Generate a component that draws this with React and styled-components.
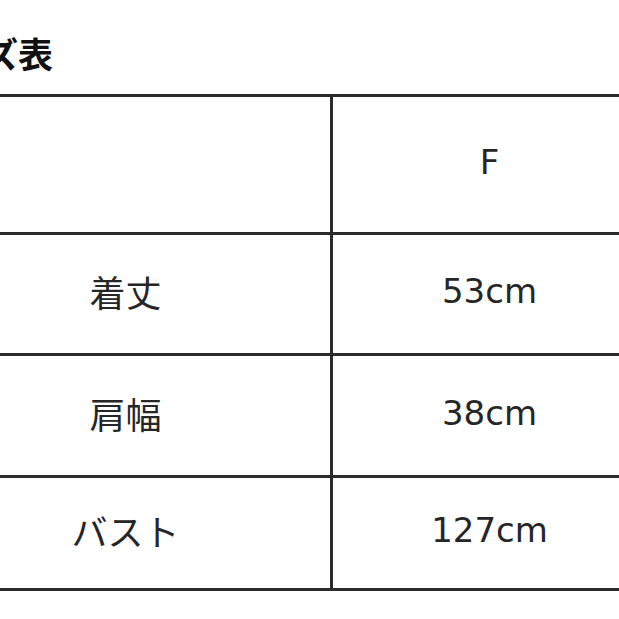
import React from "react";
import styled, { createGlobalStyle } from "styled-components";

const Global = createGlobalStyle`
  html, body { margin: 0; padding: 0; background: #fff; overflow: hidden; }
  body { width: 619px; height: 619px; }
`;

const Page = styled.div`
  width: 728px;
  margin-left: -82px;
  padding-top: 36px;
  font-family: "DejaVu Sans", "Noto Sans CJK JP", sans-serif;
  color: #222;
`;

const Title = styled.h2`
  margin: 0 0 24px -4px;
  font-family: "Noto Sans CJK JP", sans-serif;
  font-weight: 700;
  font-size: 35px;
  line-height: 34px;
  color: #111;
`;

const Table = styled.table`
  width: 100%;
  border-collapse: collapse;
  table-layout: fixed;
`;

const Row = styled.tr`
  height: ${(p) => p.$h}px;
`;

const Cell = styled.td`
  border: 3px solid #2b2b2b;
  text-align: center;
  vertical-align: middle;
  padding: 0 0 6px 0;
  font-size: ${(p) => (p.$jp ? 36 : 34)}px;
  font-family: ${(p) =>
    p.$jp ? `"Noto Sans CJK JP", sans-serif` : `"DejaVu Sans", sans-serif`};
  color: #262626;
`;

const rows = [
  { label: "", value: "F", h: 138 },
  { label: "着丈", value: "53cm", h: 121 },
  { label: "肩幅", value: "38cm", h: 122 },
  { label: "バスト", value: "127cm", h: 113 },
];

export default function App() {
  return (
    <>
      <Global />
      <Page>
        <Title>サイズ表</Title>
        <Table>
          <colgroup>
            <col style={{ width: "412px" }} />
            <col style={{ width: "316px" }} />
          </colgroup>
          <tbody>
            {rows.map((r, i) => (
              <Row key={i} $h={r.h}>
                <Cell $jp>{r.label}</Cell>
                <Cell>{r.value}</Cell>
              </Row>
            ))}
          </tbody>
        </Table>
      </Page>
    </>
  );
}
